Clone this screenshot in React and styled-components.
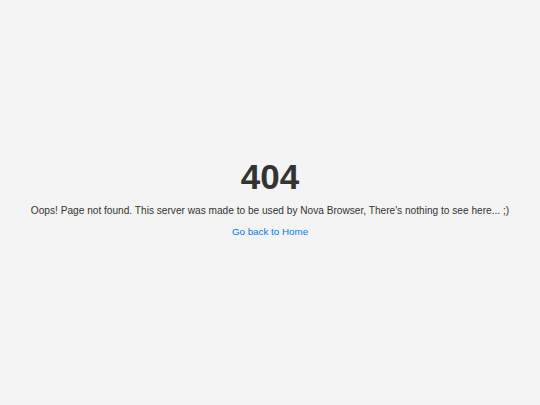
import React from "react";
import styled, { createGlobalStyle } from "styled-components";

const Global = createGlobalStyle`
  html, body { margin: 0; padding: 0; }
  body {
    background: #f4f4f4;
    font-family: "Liberation Sans", Arial, sans-serif;
    color: #333;
  }
`;

const Page = styled.main`
  box-sizing: border-box;
  height: 100vh;
  padding-bottom: 9px;
  display: flex;
  flex-direction: column;
  align-items: center;
  justify-content: center;
  text-align: center;
`;

const Code = styled.h1`
  margin: 0;
  font-size: 35px;
  font-weight: bold;
  line-height: 35px;
  color: #333;
`;

const Message = styled.p`
  margin: 11px 0 0;
  font-size: 10.15px;
  line-height: 12px;
  color: #333;
`;

const HomeLink = styled.a`
  margin-top: 9px;
  font-size: 9.8px;
  line-height: 12px;
  color: #007bff;
  text-decoration: none;
`;

export default function App() {
  return (
    <>
      <Global />
      <Page>
        <Code>404</Code>
        <Message>
          Oops! Page not found. This server was made to be used by Nova Browser, There's nothing to see here... ;)
        </Message>
        <HomeLink href="#">Go back to Home</HomeLink>
      </Page>
    </>
  );
}
